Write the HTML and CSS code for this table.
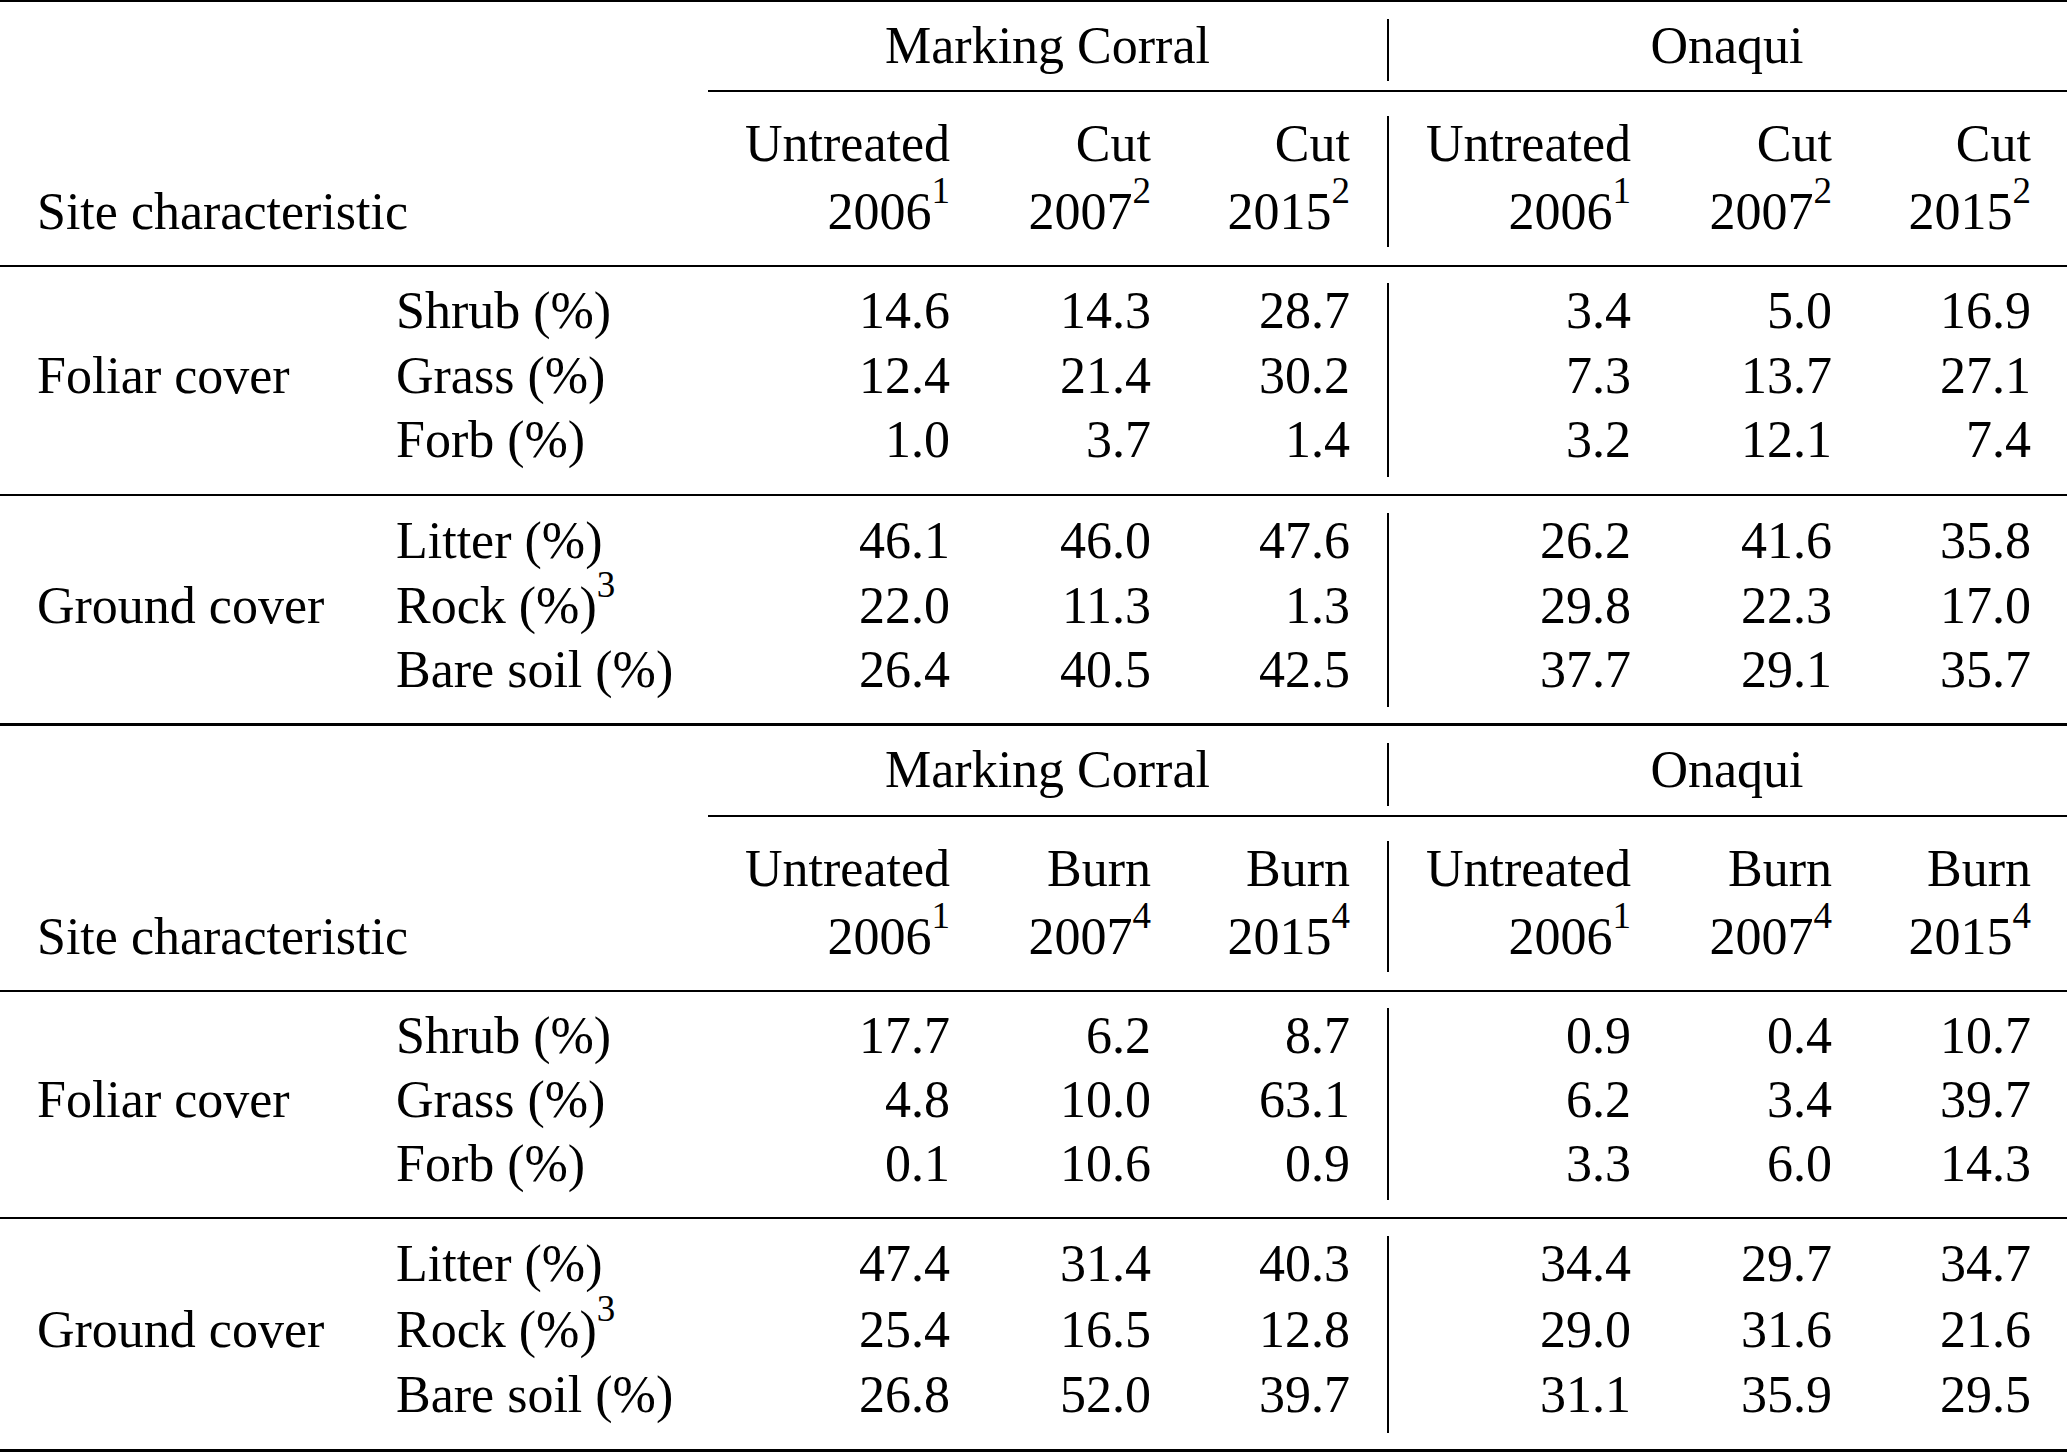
FILE: index.html
```html
<!DOCTYPE html>
<html lang="en">
<head>
<meta charset="utf-8">
<title>Site characteristics</title>
<link rel="stylesheet" href="styles.css">
</head>
<body>
<table class="tbl">
  <colgroup><col class="c-a"><col class="c-b"><col class="c-c"><col class="c-d"><col class="c-e"><col class="c-f"><col class="c-g"><col class="c-h"></colgroup>
  <tbody>
    <tr class="rule"><td colspan="8"></td></tr>
    <tr class="gap g17"><td colspan="8"></td></tr>
    <tr class="row-group">
      <td colspan="2" class="t"></td>
      <td colspan="3" class="t ctr">Marking Corral</td>
      <td colspan="3" class="t ctr vl">Onaqui</td>
    </tr>
    <tr class="gap g9"><td colspan="8"></td></tr>
    <tr class="cmid"><td colspan="2"></td><td colspan="6" class="ink"></td></tr>
    <tr class="gap g24"><td colspan="8"></td></tr>
    <tr class="row-head">
      <td colspan="2" class="t site">Site characteristic</td>
      <td class="t r"><div>Untreated</div><div class="l2">2006<sup>1</sup></div></td>
      <td class="t r"><div>Cut</div><div class="l2">2007<sup>2</sup></div></td>
      <td class="t r"><div>Cut</div><div class="l2">2015<sup>2</sup></div></td>
      <td class="t r vl"><div>Untreated</div><div class="l2">2006<sup>1</sup></div></td>
      <td class="t r"><div>Cut</div><div class="l2">2007<sup>2</sup></div></td>
      <td class="t r last"><div>Cut</div><div class="l2">2015<sup>2</sup></div></td>
    </tr>
    <tr class="gap g18"><td colspan="8"></td></tr>
    <tr class="rule"><td colspan="8"></td></tr>
    <tr class="gap g16"><td colspan="8"></td></tr>
    <tr class="data"><td class="t"></td><td class="t">Shrub (%)</td><td class="t r">14.6</td><td class="t r">14.3</td><td class="t r">28.7</td><td class="t r vl">3.4</td><td class="t r">5.0</td><td class="t r last">16.9</td></tr>
    <tr class="data mid"><td class="t">Foliar cover</td><td class="t">Grass (%)</td><td class="t r">12.4</td><td class="t r">21.4</td><td class="t r">30.2</td><td class="t r vl">7.3</td><td class="t r">13.7</td><td class="t r last">27.1</td></tr>
    <tr class="data"><td class="t"></td><td class="t">Forb (%)</td><td class="t r">1.0</td><td class="t r">3.7</td><td class="t r">1.4</td><td class="t r vl">3.2</td><td class="t r">12.1</td><td class="t r last">7.4</td></tr>
    <tr class="gap g17"><td colspan="8"></td></tr>
    <tr class="rule"><td colspan="8"></td></tr>
    <tr class="gap g17"><td colspan="8"></td></tr>
    <tr class="data"><td class="t"></td><td class="t">Litter (%)</td><td class="t r">46.1</td><td class="t r">46.0</td><td class="t r">47.6</td><td class="t r vl">26.2</td><td class="t r">41.6</td><td class="t r last">35.8</td></tr>
    <tr class="data mid"><td class="t">Ground cover</td><td class="t">Rock (%)<sup>3</sup></td><td class="t r">22.0</td><td class="t r">11.3</td><td class="t r">1.3</td><td class="t r vl">29.8</td><td class="t r">22.3</td><td class="t r last">17.0</td></tr>
    <tr class="data"><td class="t"></td><td class="t">Bare soil (%)</td><td class="t r">26.4</td><td class="t r">40.5</td><td class="t r">42.5</td><td class="t r vl">37.7</td><td class="t r">29.1</td><td class="t r last">35.7</td></tr>
    <tr class="gap g16"><td colspan="8"></td></tr>
    <tr class="rule thick"><td colspan="8"></td></tr>
  </tbody>
</table>
<table class="tbl tbl-2">
  <colgroup><col class="c-a"><col class="c-b"><col class="c-c"><col class="c-d"><col class="c-e"><col class="c-f"><col class="c-g"><col class="c-h"></colgroup>
  <tbody>
    <tr class="gap g17"><td colspan="8"></td></tr>
    <tr class="row-group">
      <td colspan="2" class="t"></td>
      <td colspan="3" class="t ctr">Marking Corral</td>
      <td colspan="3" class="t ctr vl">Onaqui</td>
    </tr>
    <tr class="gap g9"><td colspan="8"></td></tr>
    <tr class="cmid"><td colspan="2"></td><td colspan="6" class="ink"></td></tr>
    <tr class="gap g24"><td colspan="8"></td></tr>
    <tr class="row-head">
      <td colspan="2" class="t site">Site characteristic</td>
      <td class="t r"><div>Untreated</div><div class="l2">2006<sup>1</sup></div></td>
      <td class="t r"><div>Burn</div><div class="l2">2007<sup>4</sup></div></td>
      <td class="t r"><div>Burn</div><div class="l2">2015<sup>4</sup></div></td>
      <td class="t r vl"><div>Untreated</div><div class="l2">2006<sup>1</sup></div></td>
      <td class="t r"><div>Burn</div><div class="l2">2007<sup>4</sup></div></td>
      <td class="t r last"><div>Burn</div><div class="l2">2015<sup>4</sup></div></td>
    </tr>
    <tr class="gap g18"><td colspan="8"></td></tr>
    <tr class="rule"><td colspan="8"></td></tr>
    <tr class="gap g16"><td colspan="8"></td></tr>
    <tr class="data mid"><td class="t"></td><td class="t">Shrub (%)</td><td class="t r">17.7</td><td class="t r">6.2</td><td class="t r">8.7</td><td class="t r vl">0.9</td><td class="t r">0.4</td><td class="t r last">10.7</td></tr>
    <tr class="data mid"><td class="t">Foliar cover</td><td class="t">Grass (%)</td><td class="t r">4.8</td><td class="t r">10.0</td><td class="t r">63.1</td><td class="t r vl">6.2</td><td class="t r">3.4</td><td class="t r last">39.7</td></tr>
    <tr class="data mid"><td class="t"></td><td class="t">Forb (%)</td><td class="t r">0.1</td><td class="t r">10.6</td><td class="t r">0.9</td><td class="t r vl">3.3</td><td class="t r">6.0</td><td class="t r last">14.3</td></tr>
    <tr class="gap g17"><td colspan="8"></td></tr>
    <tr class="rule"><td colspan="8"></td></tr>
    <tr class="gap g17"><td colspan="8"></td></tr>
    <tr class="data tall"><td class="t"></td><td class="t">Litter (%)</td><td class="t r">47.4</td><td class="t r">31.4</td><td class="t r">40.3</td><td class="t r vl">34.4</td><td class="t r">29.7</td><td class="t r last">34.7</td></tr>
    <tr class="data"><td class="t">Ground cover</td><td class="t">Rock (%)<sup>3</sup></td><td class="t r">25.4</td><td class="t r">16.5</td><td class="t r">12.8</td><td class="t r vl">29.0</td><td class="t r">31.6</td><td class="t r last">21.6</td></tr>
    <tr class="data tall"><td class="t"></td><td class="t">Bare soil (%)</td><td class="t r">26.8</td><td class="t r">52.0</td><td class="t r">39.7</td><td class="t r vl">31.1</td><td class="t r">35.9</td><td class="t r last">29.5</td></tr>
    <tr class="gap g16"><td colspan="8"></td></tr>
    <tr class="rule thick"><td colspan="8"></td></tr>
  </tbody>
</table>
</body>
</html>
```

FILE: styles.css
```css
html, body {
  margin: 0;
  padding: 0;
  background: #fff;
}

body {
  font-family: "Liberation Serif", "Times New Roman", serif;
  font-size: 52px;
  color: #000;
}

.tbl {
  border-collapse: separate;
  border-spacing: 0;
  table-layout: fixed;
  width: 2067px;
}

.c-a { width: 359px; }
.c-b { width: 349px; }
.c-c { width: 279px; }
.c-d { width: 201px; }
.c-e { width: 199px; }
.c-f { width: 281px; }
.c-g { width: 201px; }
.c-h { width: 198px; }

.tbl td {
  padding: 0;
}

.rule td {
  height: 2px;
  background: #000;
}

.rule.thick td {
  height: 3px;
}

.cmid td {
  height: 2px;
}

.cmid td.ink {
  background: #000;
}

.g9 td { height: 9px; }
.g16 td { height: 16px; }
.g17 td { height: 17px; }
.g18 td { height: 18px; }
.g24 td { height: 24px; }

.tbl td.t {
  padding: 0 37px 10px 37px;
  line-height: 55px;
  white-space: nowrap;
  vertical-align: top;
}

.tbl .mid td.t {
  padding-bottom: 9px;
}

.tbl .tall td.t {
  padding-bottom: 11px;
}

.tbl td.r {
  text-align: right;
}

.tbl td.last {
  padding-right: 36px;
}

.tbl td.ctr {
  text-align: center;
}

.tbl td.vl {
  box-shadow: inset 2px 0 0 #000;
}

.row-group td.t {
  padding-bottom: 8px;
  line-height: 54px;
}

.tbl-2 .row-group td.t {
  padding-bottom: 9px;
}

.row-head td.t {
  padding-bottom: 8px;
}

.row-head td.site {
  vertical-align: bottom;
}

.l2 {
  margin-top: 13px;
}

sup {
  font-size: 37px;
  line-height: 0;
  vertical-align: 26px;
}
```
